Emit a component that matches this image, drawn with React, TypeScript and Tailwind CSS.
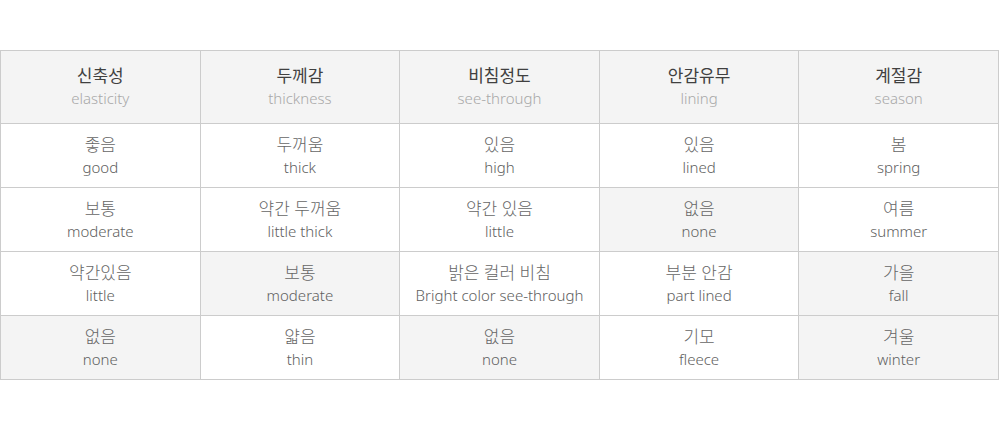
const headers = [
  { ko: '신축성', en: 'elasticity' },
  { ko: '두께감', en: 'thickness' },
  { ko: '비침정도', en: 'see-through' },
  { ko: '안감유무', en: 'lining' },
  { ko: '계절감', en: 'season' },
];

// on = highlighted (selected) cell
const rows = [
  [
    { ko: '좋음', en: 'good' },
    { ko: '두꺼움', en: 'thick' },
    { ko: '있음', en: 'high' },
    { ko: '있음', en: 'lined' },
    { ko: '봄', en: 'spring' },
  ],
  [
    { ko: '보통', en: 'moderate' },
    { ko: '약간 두꺼움', en: 'little thick' },
    { ko: '약간 있음', en: 'little' },
    { ko: '없음', en: 'none', on: true },
    { ko: '여름', en: 'summer' },
  ],
  [
    { ko: '약간있음', en: 'little' },
    { ko: '보통', en: 'moderate', on: true },
    { ko: '밝은 컬러 비침', en: 'Bright color see-through' },
    { ko: '부분 안감', en: 'part lined' },
    { ko: '가을', en: 'fall', on: true },
  ],
  [
    { ko: '없음', en: 'none', on: true },
    { ko: '얇음', en: 'thin' },
    { ko: '없음', en: 'none', on: true },
    { ko: '기모', en: 'fleece' },
    { ko: '겨울', en: 'winter', on: true },
  ],
];

export default function App() {
  return (
    <div className="w-[1000px] bg-white py-[50px] font-['Noto_Sans','Noto_Sans_CJK_KR',sans-serif]">
      <table className="w-[999px] table-fixed border-collapse text-center">
        <thead>
          <tr className="h-[73px]">
            {headers.map((h) => (
              <th key={h.en} className="border border-[#cccccc] bg-[#f4f4f4] p-0 align-middle font-normal">
                <div className="text-[17px] font-normal leading-[23px] text-[#404040]">{h.ko}</div>
                <div className="text-[15px] font-light leading-[23px] text-[#a8a8a8]">{h.en}</div>
              </th>
            ))}
          </tr>
        </thead>
        <tbody>
          {rows.map((row, i) => (
            <tr key={i} className="h-[64px]">
              {row.map((c, j) => (
                <td
                  key={j}
                  className={`border border-[#cccccc] p-0 align-middle ${c.on ? 'bg-[#f4f4f4]' : 'bg-white'}`}
                >
                  <div className="text-[17px] font-light leading-[22px] text-[#666666]">{c.ko}</div>
                  <div className="text-[15px] font-light leading-[22px] text-[#606060]">{c.en}</div>
                </td>
              ))}
            </tr>
          ))}
        </tbody>
      </table>
    </div>
  );
}
